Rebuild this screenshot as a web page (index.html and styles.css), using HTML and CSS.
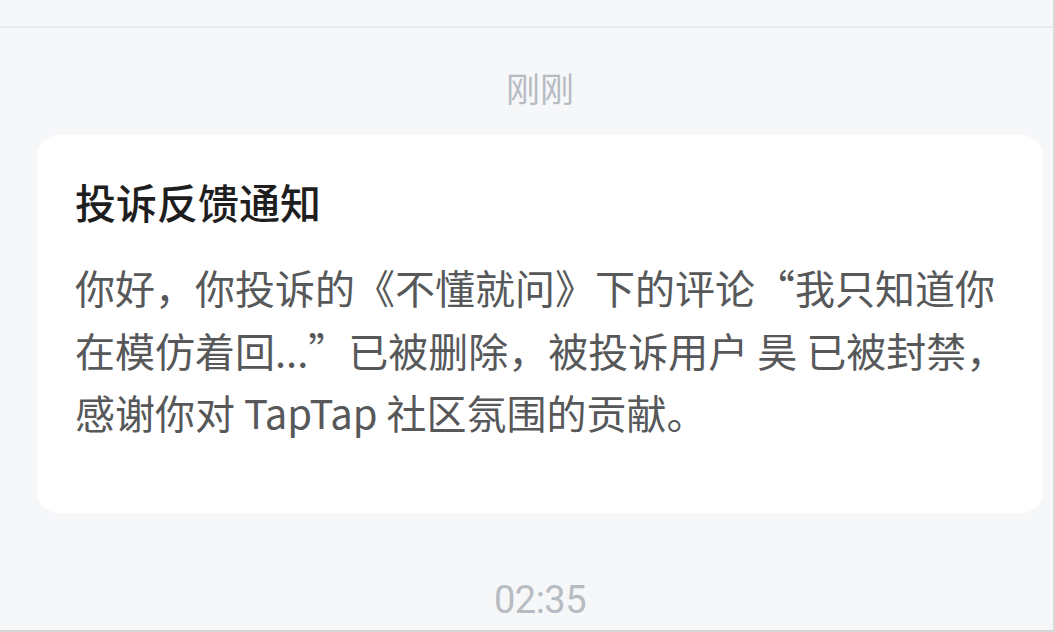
FILE: index.html
```html
<!DOCTYPE html>
<html lang="zh-CN">
<head>
<meta charset="utf-8">
<title>投诉反馈通知</title>
<link rel="stylesheet" href="styles.css">
</head>
<body>
<div class="screen">
  <div class="top-bar"></div>
  <div class="feed">
    <div class="stamp stamp-first">刚刚</div>
    <div class="card">
      <div class="card-title">投诉反馈通知</div>
      <div class="card-body">你好，你投诉的《不懂就问》下的评论“我只知道你在模仿着回...”已被删除，被投诉用户 昊 已被封禁，感谢你对 TapTap 社区氛围的贡献。</div>
    </div>
    <div class="stamp stamp-time">02:35</div>
  </div>
</div>
</body>
</html>
```

FILE: styles.css
```css
html, body {
  margin: 0;
  padding: 0;
}

body {
  background: #f6f7f9;
  font-family: "Noto Sans CJK SC", "Noto Sans", sans-serif;
}

.screen {
  width: 1055px;
  height: 632px;
  box-sizing: border-box;
  border-right: 2px solid #d9d9d9;
  border-bottom: 2px solid #d6d6d6;
  overflow: hidden;
}

.top-bar {
  height: 26px;
  border-bottom: 2px solid #e9eaed;
}

.feed {
  margin: 0 10px 0 37px;
}

.stamp {
  text-align: center;
  color: #b7bbc2;
}

.stamp-first {
  margin-top: 40px;
  font-size: 34px;
  line-height: 40px;
}

.stamp-time {
  margin-top: 65px;
  font-family: Roboto, "Noto Sans", sans-serif;
  font-size: 38px;
  line-height: 44px;
  letter-spacing: -0.5px;
}

.card {
  margin-top: 27px;
  background: #ffffff;
  border-radius: 22px;
  padding: 38px 20px 69px 38px;
}

.card-title {
  font-size: 41px;
  line-height: 56px;
  font-weight: 500;
  color: #1e1e1e;
}

.card-body {
  margin-top: 27px;
  font-size: 40px;
  line-height: 62.5px;
  color: #57585a;
}
```
